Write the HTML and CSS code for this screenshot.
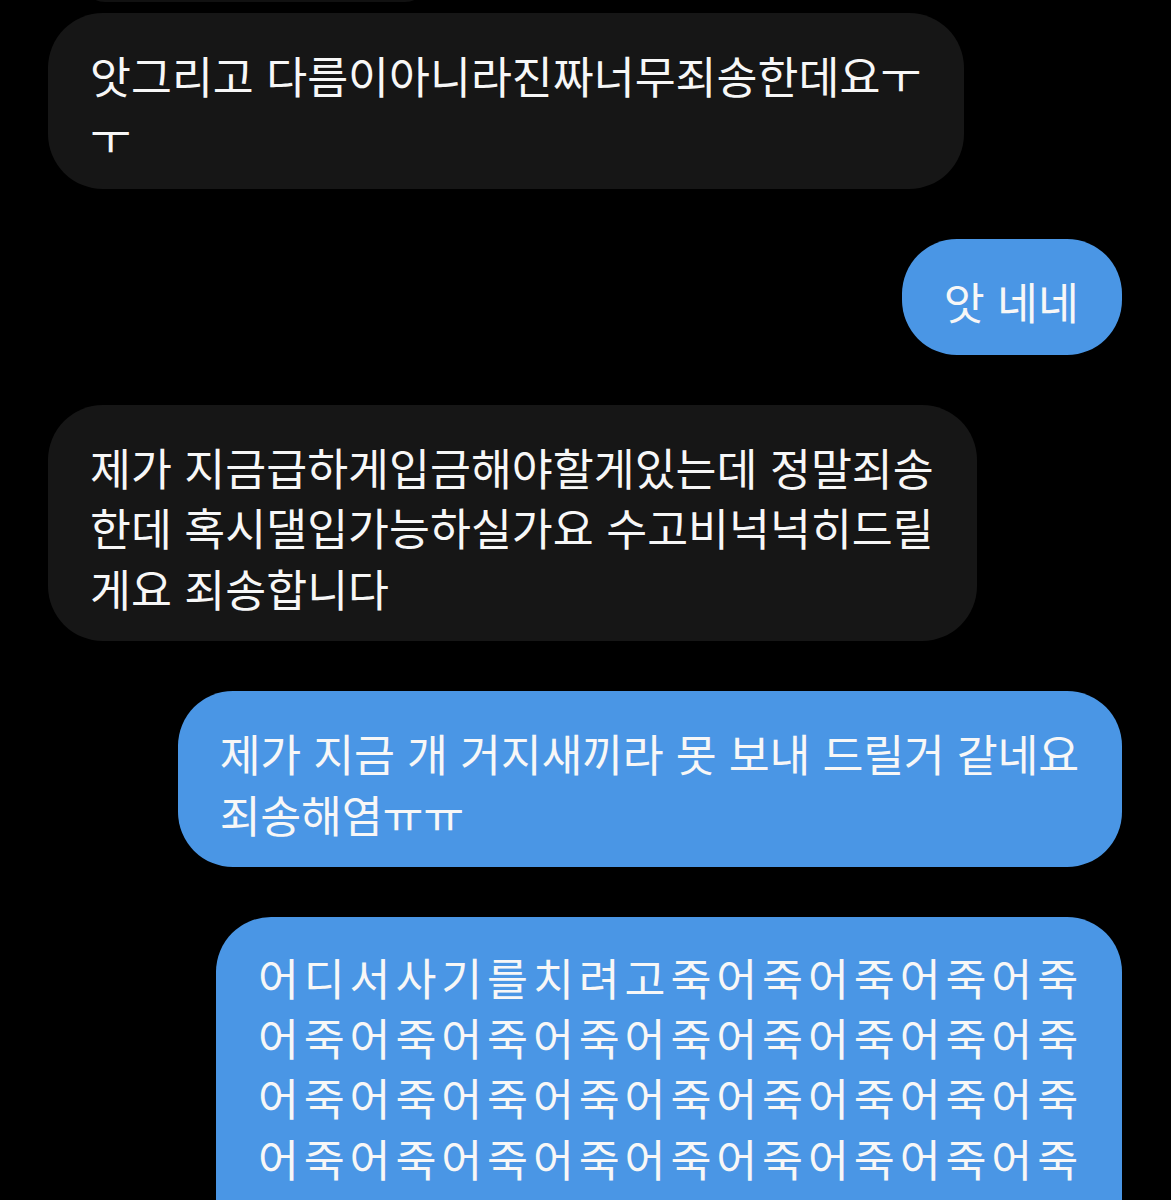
FILE: index.html
```html
<!DOCTYPE html>
<html lang="ko">
<head>
  <meta charset="UTF-8" />
  <meta name="viewport" content="width=device-width, initial-scale=1.0"/>
  <title>메시지</title>
  <link rel="stylesheet" href="styles.css">
</head>
<body>
  <div class="thread">
    <div class="msg them prev"><div class="bubble"></div></div>

    <div class="msg them">
      <div class="bubble">앗그리고 다름이아니라진짜너무죄송한데요ㅜ<br>ㅜ</div>
    </div>

    <div class="msg me">
      <div class="bubble">앗 네네</div>
    </div>

    <div class="msg them">
      <div class="bubble">제가 지금급하게입금해야할게있는데 정말죄송<br>한데 혹시댈입가능하실가요 수고비넉넉히드릴<br>게요 죄송합니다</div>
    </div>

    <div class="msg me">
      <div class="bubble tight">제가 지금 개 거지새끼라 못 보내 드릴거 같네요<br>죄송해염ㅠㅠ</div>
    </div>

    <div class="msg me">
      <div class="bubble spaced">어디서사기를치려고죽어죽어죽어죽어죽<br>어죽어죽어죽어죽어죽어죽어죽어죽어죽<br>어죽어죽어죽어죽어죽어죽어죽어죽어죽<br>어죽어죽어죽어죽어죽어죽어죽어죽어죽<br>어죽어죽어죽어죽어죽어죽어죽어죽어죽<br>어죽어죽어죽어죽</div>
    </div>
  </div>
</body>
</html>
```

FILE: styles.css
```css
:root {
  --bg: #000000;
  --them: #161616;
  --me: #4a96e5;
  --text: #f7f7f7;
}

* {
  box-sizing: border-box;
  margin: 0;
  padding: 0;
}

body {
  background-color: var(--bg);
  color: var(--text);
  font-family: "Noto Sans CJK KR", "Noto Sans", sans-serif;
  overflow: hidden;
}

.thread {
  display: flex;
  flex-direction: column;
  gap: 50px;
  padding: 0 49px 0 48px;
  margin-top: -48px;
}

.msg {
  display: flex;
}

.msg.them {
  justify-content: flex-start;
}

.msg.me {
  justify-content: flex-end;
}

.bubble {
  font-size: 44.5px;
  line-height: 60.5px;
  white-space: nowrap;
  padding: 32px 43px 23px 42px;
  border-radius: 55px;
}

.them .bubble {
  background-color: var(--them);
}

.me .bubble {
  background-color: var(--me);
}

.bubble.tight {
  letter-spacing: -0.22px;
}

.bubble.spaced {
  letter-spacing: 4.9px;
  line-height: 60.2px;
  padding-top: 30px;
  padding-right: 39px;
}

/* tail of the message above, scrolled out of view */
.prev {
  margin-bottom: -39px;
}

.prev .bubble {
  width: 350px;
  height: 50px;
  margin-left: 32px;
  padding: 0;
  background-color: #111111;
}
```
